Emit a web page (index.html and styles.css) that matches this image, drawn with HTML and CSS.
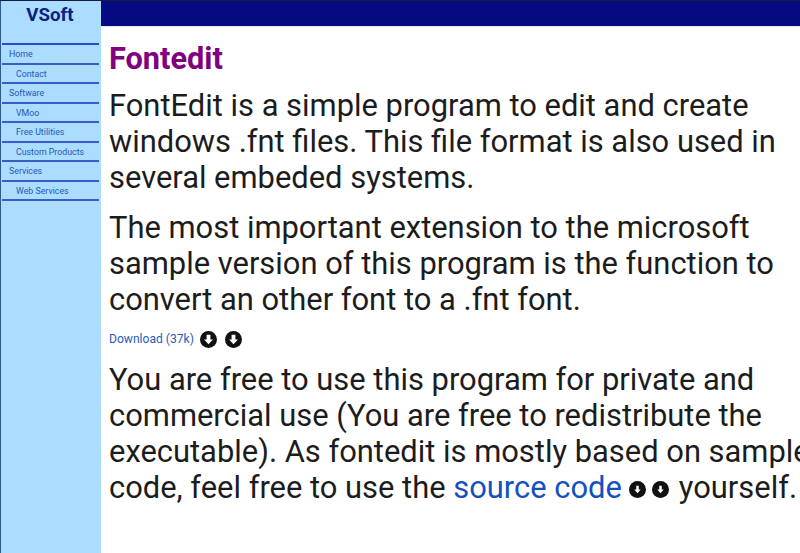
FILE: index.html
```html
<!DOCTYPE html>
<html lang="en">
<head>
<meta charset="utf-8">
<title>Fontedit</title>
<link rel="stylesheet" href="styles.css">
</head>
<body>
<div class="page">
  <aside class="sidebar">
    <div class="brand">VSoft</div>
    <nav class="nav">
      <a class="item">Home</a>
      <a class="item sub">Contact</a>
      <a class="item">Software</a>
      <a class="item sub">VMoo</a>
      <a class="item sub">Free Utilities</a>
      <a class="item sub">Custom Products</a>
      <a class="item">Services</a>
      <a class="item sub last">Web Services</a>
    </nav>
  </aside>
  <div class="main">
    <div class="topbar"></div>
    <main class="content">
      <h1>Fontedit</h1>
      <p>FontEdit is a simple program to edit and create windows .fnt files. This file format is also used in several embeded systems.</p>
      <p>The most important extension to the microsoft sample version of this program is the function to convert an other font to a .fnt font.</p>
      <div class="download">
        <a class="dl-link">Download (37k)</a>
        <svg class="ico" viewBox="0 0 16 16"><circle cx="8" cy="8" r="8"/><path class="arrow" d="M6.2 3.5h3.6V8h2.4L8 12.5 3.8 8h2.4z"/></svg>
        <svg class="ico" viewBox="0 0 16 16"><circle cx="8" cy="8" r="8"/><path class="arrow" d="M6.2 3.5h3.6V8h2.4L8 12.5 3.8 8h2.4z"/></svg>
      </div>
      <p>You are free to use this program for private and commercial use (You are free to redistribute the executable). As fontedit is mostly based on sample code, feel free to use the <a class="link">source code</a> <svg class="ico small first" viewBox="0 0 16 16"><circle cx="8" cy="8" r="8"/><path class="arrow" d="M6.8 4.5h2.4V8h1.8L8 11.5 5 8h1.8z"/></svg> <svg class="ico small second" viewBox="0 0 16 16"><circle cx="8" cy="8" r="8"/><path class="arrow" d="M6.8 4.5h2.4V8h1.8L8 11.5 5 8h1.8z"/></svg> yourself.</p>
    </main>
  </div>
</div>
</body>
</html>
```
FILE: styles.css
```css
* { box-sizing: border-box; }
html, body { margin: 0; padding: 0; height: 100%; overflow: hidden; background: #fff; }
body { font-family: Roboto, "Liberation Sans", sans-serif; color: #1c1c1c; }
.page { display: flex; width: 800px; height: 553px; overflow: hidden; border-top: 1px solid #1a1a40; }
.sidebar { width: 101px; flex: none; background: #aaddff; border-left: 1px solid #2a5a90; padding-right: 2px; }
.brand { height: 42px; padding-top: 3px; text-align: center; font-size: 18.7px; line-height: 22px; font-weight: 700; color: #0c2080; }
.nav { display: flex; flex-direction: column; border-top: 2px solid #2a4cc0; margin-left: 1px; }
.item { height: 19.5px; font-size: 8.8px; line-height: 18px; color: #2a55b8; padding-left: 7px; border-bottom: 2px solid #3a5cc8; }
.item.sub { padding-left: 14px; }
.main { flex: 1; min-width: 0; }
.topbar { height: 25px; background: #060a80; box-shadow: 0 1px 1px #e4e8f4; }
.content { padding: 16px 0 0 8px; width: 699px; }
h1 { margin: 0 0 13px; font-size: 30.7px; line-height: 33px; font-weight: 700; color: #800080; }
p { margin: 0 0 14px; font-size: 30.9px; line-height: 36px; width: 720px; }
.download { display: flex; align-items: center; gap: 8px; height: 20px; margin: -3px 0 13px; }
.dl-link { font-size: 12.1px; color: #2a5cb8; margin-right: -2px; }
.ico { width: 17px; height: 17px; display: block; }
.ico circle { fill: #111; }
.ico .arrow { fill: #fff; }
.ico.small { display: inline-block; vertical-align: 0; }
.ico.first { margin-left: -1px; }
.ico.second { margin-left: -1px; margin-right: 2px; }
.link { color: #1450c0; }
```
